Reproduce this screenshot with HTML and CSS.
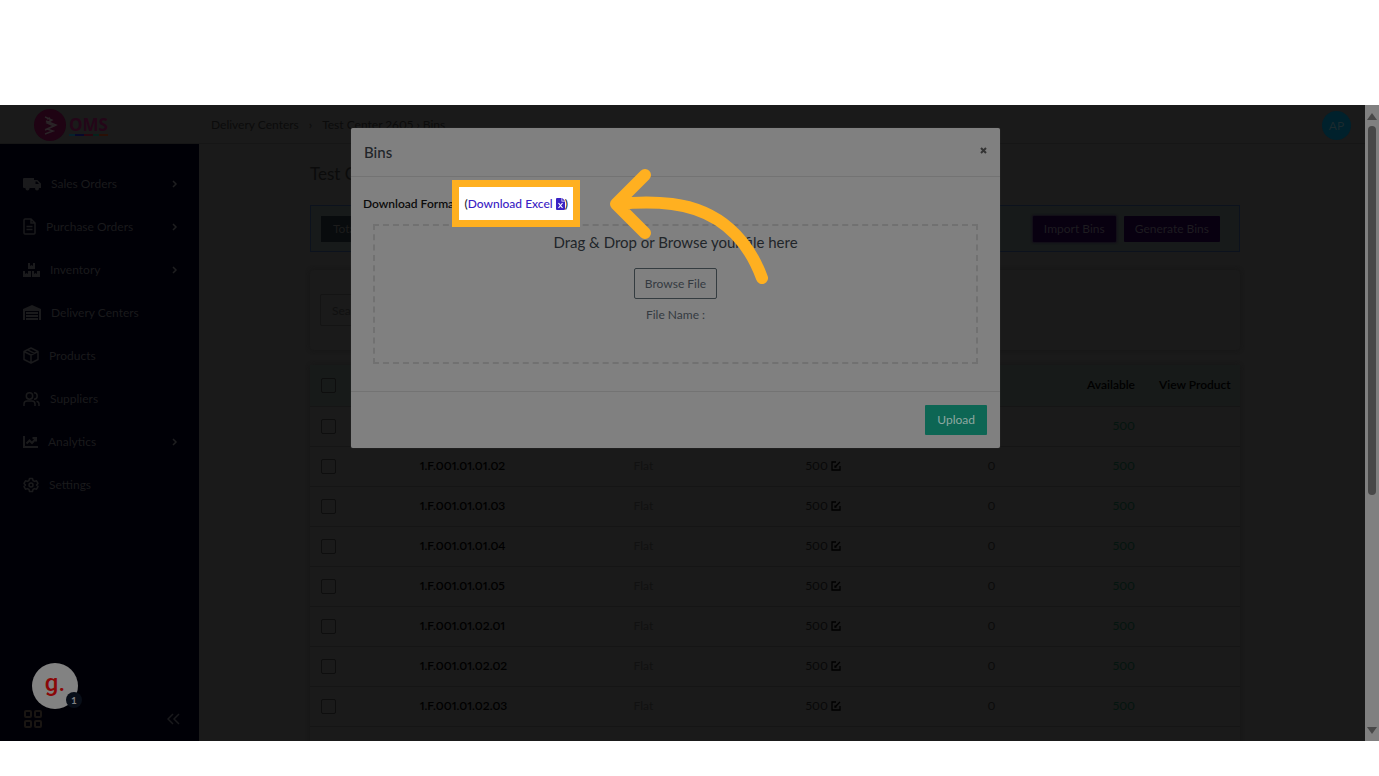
FILE: index.html
```html
<!DOCTYPE html>
<html lang="en">
<head>
    <meta charset="UTF-8">
    <meta name="viewport" content="width=device-width, initial-scale=1.0">
    <title>OMS - Bins</title>
    <link rel="stylesheet" href="styles.css">
</head>
<body>

<div class="frame">
    <div class="app">
        <!-- Top bar -->
        <header class="topbar">
            <a href="#home" class="logo" aria-label="OMS">
                <svg class="logo-mark" viewBox="0 0 32 32">
                    <circle cx="16" cy="16" r="16" fill="#1f0313"/>
                    <path d="M11 8l7 3-5 3 7 3-9 4M17 11l-4 3M16 9l-3 1M12 12l10 4-9 4 6 2-8 3" fill="none" stroke="#2a2427" stroke-width="1.500"/>
                </svg>
                <span class="logo-text">OMS</span>
            </a>
            <nav class="breadcrumb">
                <a href="#centers">Delivery Centers</a>
                <span class="sep">&rsaquo;</span>
                <span><a href="#center">Test Center 2605</a> &rsaquo; Bins</span>
            </nav>
            <span class="avatar">AP</span>
        </header>

        <!-- Sidebar -->
        <aside class="sidebar">
            <nav class="side-nav">
                <a href="#sales">
                    <svg width="18" height="14" viewBox="0 0 18 14" fill="currentColor"><path d="M1 1h10v10H1a1 1 0 0 1-1-1V2a1 1 0 0 1 1-1zM11 3h3.500L18 6.500V11h-7zM12.500 4.500V7h3.500l-2-2.500z" fill-rule="evenodd"/><circle cx="4.500" cy="11.500" r="2"/><circle cx="14" cy="11.500" r="2"/></svg>
                    <span>Sales Orders</span>
                    <svg class="chevron" width="6" height="8" viewBox="0 0 6 8"><path d="M1 1l3 3-3 3"/></svg>
                </a>
                <a href="#purchase">
                    <svg width="13" height="17" viewBox="0 0 13 17" fill="none" stroke="currentColor" stroke-width="1.500"><path d="M1 2a1 1 0 0 1 1-1h6l4 4v10a1 1 0 0 1-1 1H2a1 1 0 0 1-1-1zM8 1v4h4M3.500 8.500h6M3.500 11.500h6"/></svg>
                    <span>Purchase Orders</span>
                    <svg class="chevron" width="6" height="8" viewBox="0 0 6 8"><path d="M1 1l3 3-3 3"/></svg>
                </a>
                <a href="#inventory">
                    <svg width="17" height="16" viewBox="0 0 17 16" fill="currentColor"><path d="M5 1h2v3l1.500-1L10 4V1h2v6H5zM0 9h2v3l1.500-1L5 12V9h3v6H0zM9 9h2v3l1.500-1 1.500 1V9h3v6H9z"/></svg>
                    <span>Inventory</span>
                    <svg class="chevron" width="6" height="8" viewBox="0 0 6 8"><path d="M1 1l3 3-3 3"/></svg>
                </a>
                <a href="#delivery">
                    <svg width="18" height="15" viewBox="0 0 18 15" fill="currentColor"><path d="M0 4l9-4 9 4v11h-2V6H2v9H0zM3 7h12v2H3zM3 10h12v2H3zM3 13h12v2H3z"/></svg>
                    <span>Delivery Centers</span>
                </a>
                <a href="#products">
                    <svg width="16" height="17" viewBox="0 0 16 17" fill="none" stroke="currentColor" stroke-width="1.500" stroke-linejoin="round"><path d="M8 1l7 3.500v8L8 16l-7-3.500v-8zM1 4.500L8 8l7-3.500M8 8v8M4.500 2.800l7 3.500"/></svg>
                    <span>Products</span>
                </a>
                <a href="#suppliers">
                    <svg width="17" height="16" viewBox="0 0 17 16" fill="none" stroke="currentColor" stroke-width="1.500"><circle cx="6.500" cy="5" r="3.200"/><path d="M1 15v-2a3 3 0 0 1 3-3h5a3 3 0 0 1 3 3v2M11 1.800a3.200 3.200 0 0 1 0 6.400M13.500 10.300a3 3 0 0 1 2.500 3V15"/></svg>
                    <span>Suppliers</span>
                </a>
                <a href="#analytics">
                    <svg width="15" height="12" viewBox="0 0 15 12" fill="none" stroke="currentColor" stroke-width="2"><path d="M1 0v11h14M3.500 7.500l3-3 2.500 2.500 3.500-4M9.500 2H13v3.500"/></svg>
                    <span>Analytics</span>
                    <svg class="chevron" width="6" height="8" viewBox="0 0 6 8"><path d="M1 1l3 3-3 3"/></svg>
                </a>
                <a href="#settings">
                    <svg width="16" height="16" viewBox="0 0 16 16" fill="none" stroke="currentColor" stroke-width="1.500" stroke-linejoin="round"><path d="M6.500 1.500h3l.5 2 1.500.9 2-.6 1.500 2.600L13.500 8l1.500 1.600-1.500 2.600-2-.6-1.500.9-.5 2h-3l-.5-2-1.500-.9-2 .6L1 9.600 2.500 8 1 6.400l1.500-2.600 2 .6L6 3.500z"/><circle cx="8" cy="8" r="2"/></svg>
                    <span>Settings</span>
                </a>
            </nav>
            <div class="side-footer">
                <svg width="18" height="18" viewBox="0 0 18 18" fill="none" stroke="#191512" stroke-width="2"><rect x="1" y="1" width="6" height="6" rx="1"/><rect x="11" y="1" width="6" height="6" rx="1"/><rect x="1" y="11" width="6" height="6" rx="1"/><rect x="11" y="11" width="6" height="6" rx="1"/></svg>
                <svg width="13" height="12" viewBox="0 0 13 12" fill="none" stroke="#19191c" stroke-width="1.500"><path d="M6 1L1 6l5 5M12 1L7 6l5 5"/></svg>
            </div>
            <div class="chat-bubble"><span class="chat-letter">g.</span><span class="chat-count">1</span></div>
        </aside>

        <!-- Page content -->
        <main class="content">
            <h1>Test Center 2605</h1>
            <section class="toolbar">
                <span class="total">Total Bins</span>
                <div class="toolbar-actions">
                    <button type="button" class="btn-dark focused">Import Bins</button>
                    <button type="button" class="btn-dark">Generate Bins</button>
                </div>
            </section>
            <section class="search-card">
                <input type="text" placeholder="Search" aria-label="Search">
            </section>
            <section class="table-card">
                <table>
                    <colgroup>
                        <col class="col-check"><col class="col-name"><col class="col-type"><col class="col-cap"><col class="col-used"><col class="col-avail"><col class="col-view">
                    </colgroup>
                    <thead>
                        <tr><th><input type="checkbox" aria-label="Select all"></th><th>Bin</th><th>Type</th><th>Capacity</th><th class="num">Used</th><th class="num">Available</th><th>View Product</th></tr>
                    </thead>
                    <tbody id="bins"></tbody>
                </table>
            </section>
        </main>
    </div>

    <!-- Scrollbar -->
    <div class="scrollbar">
        <svg width="10" height="7" viewBox="0 0 10 7"><path d="M5 0l5 7H0z" fill="#484848"/></svg>
        <div class="track"><div class="thumb"></div></div>
        <svg width="10" height="7" viewBox="0 0 10 7"><path d="M5 7l5-7H0z" fill="#484848"/></svg>
    </div>

    <!-- Import modal -->
    <div class="modal-wrap">
        <div class="modal" role="dialog" aria-labelledby="modal-title">
            <div class="modal-header">
                <h2 id="modal-title">Bins</h2>
                <button type="button" class="close" aria-label="Close"><svg width="7" height="7" viewBox="0 0 7 7"><path d="M1 1l5 5M6 1L1 6" stroke="#333" stroke-width="2"/></svg></button>
            </div>
            <div class="modal-body">
                <div class="format">
                    <span>Download Format</span>
                    <span class="highlight">(<a href="#excel">Download Excel <svg width="9" height="12" viewBox="0 0 9 12"><path d="M1 0h4.500v3.500H9V11a1 1 0 0 1-1 1H1a1 1 0 0 1-1-1V1a1 1 0 0 1 1-1zM6.200 0L9 2.800H6.200z" fill="#3a22c4"/><path d="M2.500 5l4 5M6.500 5l-4 5" stroke="#fff" stroke-width="1.200"/></svg></a>)</span>
                </div>
                <div class="dropzone">
                    <p class="drop-title">Drag &amp; Drop or Browse your file here</p>
                    <button type="button" class="browse">Browse File</button>
                    <p class="file-name">File Name :</p>
                </div>
            </div>
            <div class="modal-footer">
                <button type="button" class="upload">Upload</button>
            </div>
            <svg class="arrow" width="160" height="118" viewBox="0 0 160 118">
                <path d="M37 8L8 37l29 29M10 37c20-2 38-2 54 0c48 6 76 36 90 74" fill="none" stroke="#ffb020" stroke-width="12" stroke-linecap="round" stroke-linejoin="round"/>
            </svg>
        </div>
    </div>
</div>

<script>
    const bins = [
        "1.F.001.01.01.01", "1.F.001.01.01.02", "1.F.001.01.01.03", "1.F.001.01.01.04", "1.F.001.01.01.05",
        "1.F.001.01.02.01", "1.F.001.01.02.02", "1.F.001.01.02.03"
    ];
    const edit = '<svg class="edit" width="10" height="10" viewBox="0 0 10 10"><path d="M5 1H1v8h8V5M4 6l5-5M4 4.500V6h1.500" fill="none" stroke="#000" stroke-width="1.300"/></svg>';

    document.getElementById("bins").innerHTML = bins.map(name =>
        `<tr>
            <td><input type="checkbox" aria-label="Select ${name}"></td>
            <td class="name">${name}</td>
            <td class="type">Flat</td>
            <td class="cap">500 ${edit}</td>
            <td class="num">0</td>
            <td class="num avail">500</td>
            <td></td>
        </tr>`
    ).join("");
</script>

</body>
</html>
```
FILE: styles.css
```css
/* General */
* {
    box-sizing: border-box;
}

body {
    margin: 0;
    background: #fff;
    font-family: Lato, "Liberation Sans", sans-serif;
    font-size: 12px;
    line-height: 16px;
    color: #0b0b0b;
    height: 100vh;
    padding: 105px 0 35px;
    overflow: hidden;
}

button,
input {
    font: inherit;
}

a {
    color: inherit;
    text-decoration: none;
}

.frame {
    position: relative;
    height: 100%;
    display: flex;
    overflow: hidden;
    background: #1a1a1a;
}

.app {
    flex: 1;
    min-width: 0;
    display: grid;
    grid-template-columns: 199px 1fr;
    grid-template-rows: 39px 1fr;
}

/* Top bar */
.topbar {
    grid-column: 1 / 3;
    display: flex;
    align-items: center;
    padding: 2px 14px 0 34px;
    border-bottom: 1px solid #161616;
}

.logo {
    display: flex;
    align-items: center;
    gap: 3px;
    width: 177px;
}

.logo-mark {
    width: 32px;
    height: 32px;
}

.logo-text {
    font-family: "Open Sans", sans-serif;
    font-size: 17px;
    line-height: 19px;
    font-weight: 700;
    color: #240618;
    border-bottom: 2px solid;
    border-image: linear-gradient(90deg, #06222c 20%, #07082a 20% 40%, #2a0610 40% 60%, #06221c 60% 75%, #2a1006 75%) 2;
}

.breadcrumb {
    display: flex;
    gap: 10px;
    flex: 1;
    font-variant-numeric: proportional-nums;
}

.avatar {
    width: 29px;
    height: 29px;
    border-radius: 50%;
    background: #00212c;
    color: #1c2a2e;
    font-size: 12px;
    line-height: 29px;
    text-align: center;
}

/* Sidebar */
.sidebar {
    position: relative;
    background: #000006;
    color: #1a1a1c;
    display: flex;
    flex-direction: column;
    justify-content: space-between;
    padding-top: 18px;
}

.side-nav a {
    display: flex;
    align-items: center;
    gap: 10px;
    height: 43px;
    padding: 0 21px 0 23px;
}

.chevron {
    margin-left: auto;
    fill: none;
    stroke: #1e1e20;
    stroke-width: 1.5;
}

.side-footer {
    display: flex;
    justify-content: space-between;
    align-items: center;
    padding: 0 19px 13px 24px;
}

.chat-bubble {
    position: absolute;
    left: 32px;
    bottom: 32px;
    width: 46px;
    height: 46px;
    border-radius: 50%;
    background: #828282;
    text-align: center;
}

.chat-letter {
    font-family: Roboto, sans-serif;
    font-size: 24px;
    line-height: 40px;
    font-weight: 500;
    color: #8a0808;
}

.chat-count {
    position: absolute;
    right: -4px;
    bottom: 1px;
    width: 16px;
    height: 16px;
    border-radius: 50%;
    background: #080e18;
    color: #808080;
    font-size: 10px;
    font-weight: 700;
}

/* Content */
.content {
    padding: 20px 125px 0 111px;
    min-height: 0;
    overflow: hidden;
}

h1 {
    margin: 0 0 21px;
    font-size: 17px;
    line-height: 20px;
    font-weight: 400;
}

.toolbar {
    display: flex;
    justify-content: space-between;
    align-items: center;
    height: 47px;
    padding: 0 19px 0 10px;
    background: #171a1a;
    border: 1px solid #0c121d;
}

.total {
    padding: 5px 12px;
    background: #080b0d;
    color: #1c1c1c;
}

.toolbar-actions {
    display: flex;
    gap: 8px;
}

.btn-dark {
    height: 26px;
    padding: 0 11px;
    border: 0;
    border-radius: 1px;
    background: #080010;
    color: #1e1c20;
}

.focused {
    box-shadow: 0 0 2px 1px #110d18;
}

.search-card {
    margin: 18px 0 15px;
    padding: 24px 10px;
    border-radius: 4px;
    box-shadow: 0 0 4px #151515;
}

.search-card input {
    display: block;
    width: 220px;
    height: 32px;
    padding: 0 11px;
    border: 1px solid #141414;
    border-radius: 2px;
    background: transparent;
}

.search-card input::placeholder {
    color: #101010;
}

/* Bins table */
.table-card {
    height: 100%;
    border-radius: 4px;
    box-shadow: 0 0 4px #151515;
}

table {
    width: 100%;
    table-layout: fixed;
    border-collapse: collapse;
    font-variant-numeric: proportional-nums;
}

.col-check { width: 10.5%; }
.col-name { width: 23%; }
.col-type { width: 18.5%; }
.col-cap { width: 12%; }
.col-used { width: 11%; }
.col-avail { width: 15%; }
.col-view { width: 10%; }

th,
td {
    height: 40px;
    padding: 0 12px;
    text-align: left;
    white-space: nowrap;
    border-bottom: 1px solid #151515;
}

th {
    height: 41px;
    background: #171a19;
    color: #000;
    font-weight: 600;
}

th:last-child {
    padding-right: 0;
}

th:first-child,
td:first-child {
    padding-left: 11px;
}

input[type="checkbox"] {
    appearance: none;
    display: block;
    width: 15px;
    height: 15px;
    margin: 0;
    border: 1px solid #0e0e0e;
    border-radius: 2px;
}

.name {
    color: #000;
    font-weight: 600;
}

.type {
    color: #111;
}

.cap {
    color: #080808;
}

.edit {
    vertical-align: -1px;
}

.num {
    text-align: right;
}

.avail {
    color: #04150f;
}

/* Scrollbar */
.scrollbar {
    width: 14px;
    background: #808080;
    display: flex;
    flex-direction: column;
    align-items: center;
    padding: 8px 0 7px;
}

.track {
    flex: 1;
    padding: 6px 0;
}

.thumb {
    width: 8px;
    height: 62%;
    border-radius: 4px;
    background: #484848;
}

/* Modal */
.modal-wrap {
    position: absolute;
    inset: 0;
    display: flex;
    justify-content: center;
    align-items: flex-start;
    padding: 23px 28px 0 0;
}

.modal {
    position: relative;
    isolation: isolate;
    width: 48%;
    min-width: 649px;
    border-radius: 2px;
    background: #808080;
    box-shadow: 0 0 1px #555;
}

.modal-header {
    display: flex;
    justify-content: space-between;
    align-items: center;
    height: 49px;
    padding: 0 13px;
    border-bottom: 1px solid #737373;
}

h2 {
    margin: 0;
    font-size: 15px;
    line-height: 20px;
    font-weight: 500;
    color: #212529;
}

.close {
    display: flex;
    padding: 0 0 3px;
    border: 0;
    background: none;
}

.modal-body {
    padding: 18px 12px 27px;
}

.format {
    display: flex;
    gap: 6px;
    margin: 0 0 11px;
    font-size: 12px;
    line-height: 18px;
    font-weight: 600;
    color: #0b0b0b;
}

.highlight {
    position: relative;
    color: #222;
    font-weight: 500;
}

.highlight a {
    color: #3a22c4;
}

.highlight svg {
    vertical-align: -2px;
}

/* white fill behind the link, orange frame over it */
.highlight::before,
.highlight::after {
    content: "";
    position: absolute;
    inset: -15px -12px -14px;
}

.highlight::before {
    background: #fff;
    z-index: -1;
}

.highlight::after {
    border: 7px solid #ffb020;
    pointer-events: none;
}

.dropzone {
    display: flex;
    flex-direction: column;
    align-items: center;
    height: 140px;
    margin: 0 10px;
    padding-top: 6px;
    border: 2px dashed #717171;
}

.dropzone p {
    margin: 0;
}

.drop-title {
    font-size: 15px;
    line-height: 20px;
    color: #212529;
}

.browse {
    height: 31px;
    margin: 16px 0 8px;
    padding: 0 10px;
    border: 1px solid #343c40;
    border-radius: 2px;
    background: transparent;
    color: #343a40;
}

.file-name {
    color: #343a40;
}

.modal-footer {
    display: flex;
    justify-content: flex-end;
    padding: 13px;
    border-top: 1px solid #737373;
}

.upload {
    height: 30px;
    padding: 0 12px;
    border: 0;
    border-radius: 1px;
    background: #0d6654;
    color: #8fa8a2;
}

/* Pointer arrow over the modal */
.arrow {
    position: absolute;
    top: 39px;
    left: 257px;
}
```
